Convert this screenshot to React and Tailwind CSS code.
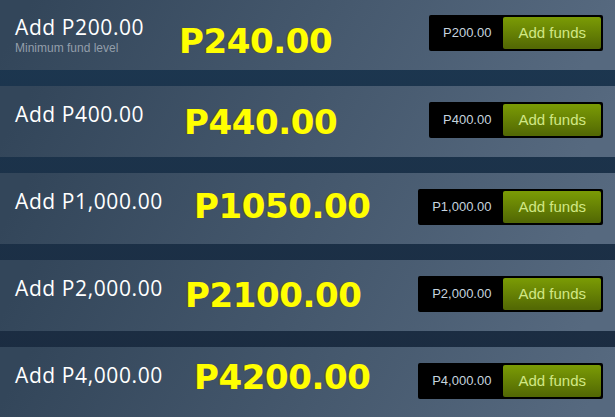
const rows = [
  { add: 'Add P200.00', sub: 'Minimum fund level', bonus: 'P240.00', price: 'P200.00', bonusCls: 'ml-[4px] mt-[25px]' },
  { add: 'Add P400.00', bonus: 'P440.00', price: 'P400.00', bonusCls: 'ml-[9px] mt-[19px]' },
  { add: 'Add P1,000.00', bonus: 'P1050.00', price: 'P1,000.00', bonusCls: 'ml-[19px] mt-[16px]' },
  { add: 'Add P2,000.00', bonus: 'P2100.00', price: 'P2,000.00', bonusCls: 'ml-[10px] mt-[18px]' },
  { add: 'Add P4,000.00', bonus: 'P4200.00', price: 'P4,000.00', bonusCls: 'ml-[19px] mt-[13px]' },
];

function FundRow({ row }) {
  return (
    <div className="flex h-[71px] shrink-0 items-start bg-[linear-gradient(-60deg,#56697f_5%,#33465a_95%)]">
      <div className="w-[175px] shrink-0 pl-[15px] pt-[14px]">
        <div className="text-[21px] leading-[28px] text-white tracking-[0.6px] whitespace-nowrap font-['Open_Sans',sans-serif]">
          {row.add}
        </div>
        {row.sub && (
          <div className="text-[12px] leading-[14px] text-[#939eaa] font-['Liberation_Sans',Arial,sans-serif] whitespace-nowrap">
            {row.sub}
          </div>
        )}
      </div>
      <div
        className={`${row.bonusCls} text-[34px] leading-[34px] font-bold tracking-[-0.4px] text-[#ffff00] whitespace-nowrap font-['DejaVu_Sans',sans-serif] [text-shadow:-1px_0_0_rgba(130,60,40,0.7)]`}
      >
        {row.bonus}
      </div>
      <div className="ml-auto mr-[12px] mt-[16px] flex items-center rounded-[2px] bg-black p-[2px]">
        <div className="px-[12px] text-[13px] text-[#c6d4df] font-['Liberation_Sans',Arial,sans-serif] whitespace-nowrap">
          {row.price}
        </div>
        <button className="h-[32px] rounded-[2px] px-[15px] text-[15px] leading-[32px] text-[#d2e885] bg-[linear-gradient(to_bottom,#799905_5%,#536904_95%)] font-['Liberation_Sans',Arial,sans-serif] whitespace-nowrap">
          Add funds
        </button>
      </div>
    </div>
  );
}

export default function App() {
  return (
    <div className="h-[417px] w-[615px] overflow-hidden bg-[linear-gradient(to_bottom,#1c3852,#1b2a3e)]">
      <div className="-mt-px flex flex-col gap-[16px]">
        {rows.map((row) => (
          <FundRow key={row.add} row={row} />
        ))}
      </div>
    </div>
  );
}
